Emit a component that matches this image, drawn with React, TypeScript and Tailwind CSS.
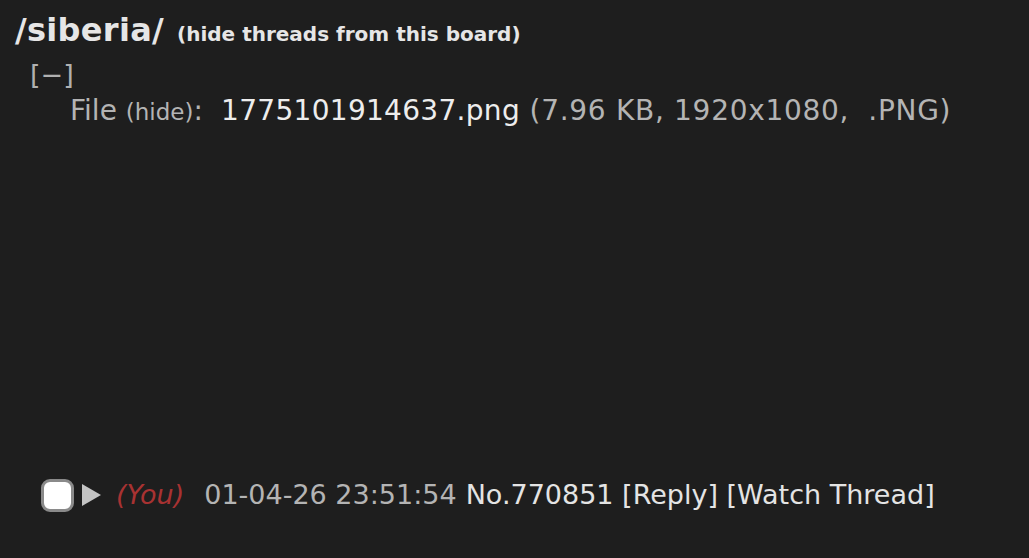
import React from 'react';

export default function App() {
  return (
    <div className="min-h-screen w-full bg-[#1e1e1e] font-['DejaVu_Sans',sans-serif] text-[#e4e4e4] overflow-hidden">
      <div className="pt-[10px]">
        {/* board header */}
        <div className="flex items-baseline pl-[15px] leading-[40px]">
          <span className="text-[32px] font-bold tracking-[0.3px] text-[#e6e6e6]">/siberia/</span>
          <span className="ml-[13px] text-[20px] font-bold text-[#e6e6e6]">(hide threads from this board)</span>
        </div>

        {/* collapse toggle */}
        <div className="mt-[3px] pl-[30px] text-[27px] leading-[36px] text-[#b0b0b0]">[−]</div>

        {/* file info */}
        <div className="pl-[70px] text-[28px] leading-[36px] whitespace-pre text-[#b4b4b4]">
          File <span className="text-[23px]">(hide)</span>:<span className="ml-[9px] tracking-[0.3px] text-[#ededed]"> 1775101914637.png</span>
          <span className="tracking-[0.7px]"> (7.96 KB, 1920x1080,  .PNG)</span>
        </div>

        {/* thumbnail area (dark image) */}
        <div className="h-[347px]"></div>

        {/* post info row */}
        <div className="flex h-[36px] items-center pl-[41px] text-[27px] leading-[36px]">
          <div className="h-[33px] w-[33px] rounded-[9px] border-[3px] border-[#8a8a8a] bg-white"></div>
          <svg className="ml-[8px]" width="19" height="22" viewBox="0 0 19 22">
            <polygon points="0,0 19,11 0,22" fill="#c4c4c4" />
          </svg>
          <span className="ml-[15px] italic text-[#a83232]">(You)</span>
          <span className="ml-[20px] text-[#b4b4b4]">01-04-26 23:51:54</span>
          <span className="ml-[9px] text-[#e4e4e4]">No.770851 [Reply] [Watch Thread]</span>
        </div>
      </div>
    </div>
  );
}
